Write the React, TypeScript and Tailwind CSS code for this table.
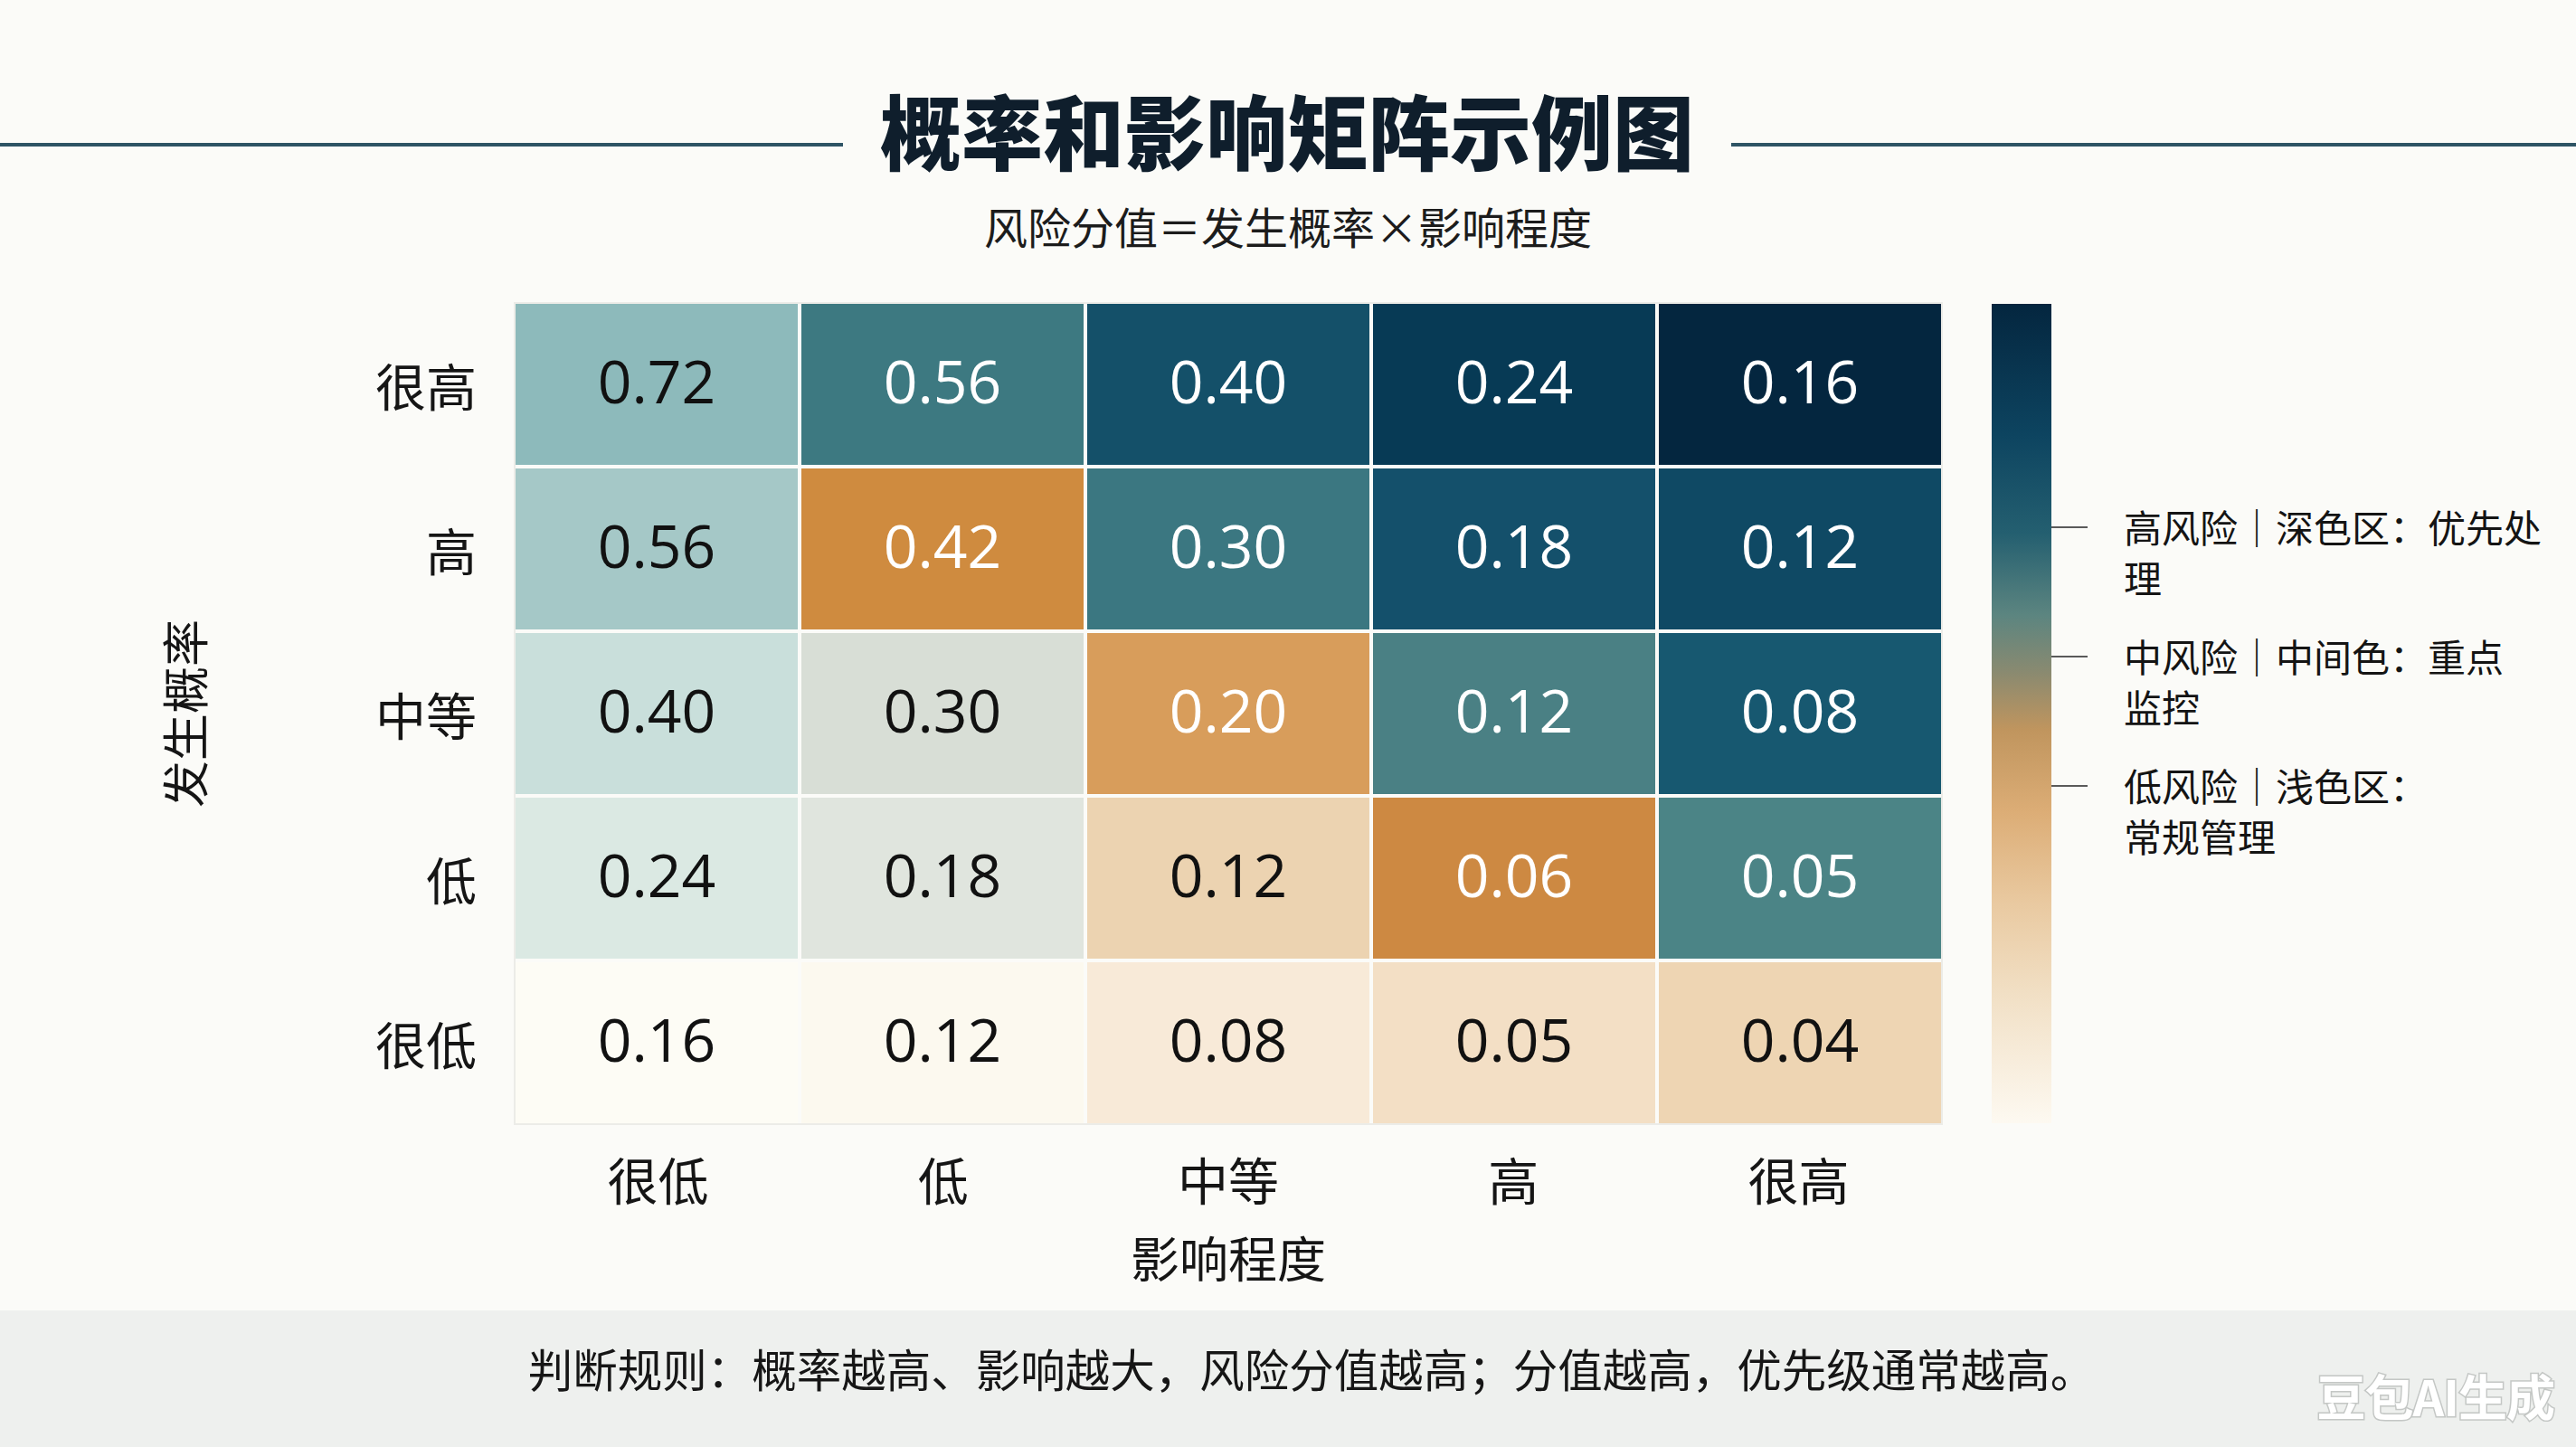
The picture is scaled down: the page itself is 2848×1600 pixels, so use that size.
const rowLabels = ['很高', '高', '中等', '低', '很低']
const colLabels = ['很低', '低', '中等', '高', '很高']

type Cell = { v: string; bg: string; light?: boolean }

// light = white text
const matrix: Cell[][] = [
  [
    { v: '0.72', bg: 'bg-[#8dbabb]' },
    { v: '0.56', bg: 'bg-[#3d7981]', light: true },
    { v: '0.40', bg: 'bg-[#145069]', light: true },
    { v: '0.24', bg: 'bg-[#073a55]', light: true },
    { v: '0.16', bg: 'bg-[#04263f]', light: true },
  ],
  [
    { v: '0.56', bg: 'bg-[#a5c8c7]' },
    { v: '0.42', bg: 'bg-[#cf8b3f]', light: true },
    { v: '0.30', bg: 'bg-[#3b7781]', light: true },
    { v: '0.18', bg: 'bg-[#14506b]', light: true },
    { v: '0.12', bg: 'bg-[#0f4964]', light: true },
  ],
  [
    { v: '0.40', bg: 'bg-[#c9dfdb]' },
    { v: '0.30', bg: 'bg-[#d8ded6]' },
    { v: '0.20', bg: 'bg-[#d89d5b]', light: true },
    { v: '0.12', bg: 'bg-[#4a8084]', light: true },
    { v: '0.08', bg: 'bg-[#175870]', light: true },
  ],
  [
    { v: '0.24', bg: 'bg-[#dbe9e3]' },
    { v: '0.18', bg: 'bg-[#e0e5de]' },
    { v: '0.12', bg: 'bg-[#ecd3b1]' },
    { v: '0.06', bg: 'bg-[#cd8942]', light: true },
    { v: '0.05', bg: 'bg-[#4b8486]', light: true },
  ],
  [
    { v: '0.16', bg: 'bg-[#fdfcf5]' },
    { v: '0.12', bg: 'bg-[#fcf9ef]' },
    { v: '0.08', bg: 'bg-[#f8ead8]' },
    { v: '0.05', bg: 'bg-[#f3dfc5]' },
    { v: '0.04', bg: 'bg-[#eed5b3]' },
  ],
]

const legend = [
  ['高风险｜深色区：优先处', '理'],
  ['中风险｜中间色：重点', '监控'],
  ['低风险｜浅色区：', '常规管理'],
]

export default function App() {
  return (
    <div className="relative flex h-[1600px] w-[2848px] flex-col overflow-hidden bg-[#fbfbf8] font-['Noto_Sans_CJK_SC',sans-serif] text-[#151515]">
      {/* title */}
      <div className="flex items-start pt-[97px]">
        <div className="mt-[61px] h-[4px] w-[932px] bg-[#2e5465]" />
        <h1 className="whitespace-nowrap px-[41px] text-[90px] font-black leading-[90px] text-[#0f1e2c]">
          概率和影响矩阵示例图
        </h1>
        <div className="mt-[61px] h-[4px] flex-1 bg-[#2e5465]" />
      </div>

      <p className="mt-[38px] text-center text-[48px] leading-[48px] text-[#1c1c1c]">
        风险分值＝发生概率×影响程度
      </p>

      {/* chart */}
      <div className="mt-[63px] flex pl-[173px]">
        <div className="flex h-[906px] w-[60px] items-center justify-center">
          <span className="rotate-180 text-[52px] leading-[60px] [text-orientation:sideways] [writing-mode:vertical-rl]">
            发生概率
          </span>
        </div>

        <div className="flex w-[294px] flex-col gap-[4px]">
          {rowLabels.map((r) => (
            <div key={r} className="flex h-[178px] items-center justify-end text-[56px] leading-[56px]">
              {r}
            </div>
          ))}
        </div>

        <div className="ml-[43px] grid w-[1576px] grid-cols-5 gap-[4px] shadow-[0_0_0_2px_#ecece8]">
          {matrix.flat().map((c, i) => (
            <div
              key={i}
              className={`flex h-[178px] items-center justify-center pb-[10px] font-['Open_Sans','Noto_Sans',sans-serif] text-[66px] leading-none ${c.bg} ${
                c.light ? 'text-white' : 'text-[#111]'
              }`}
            >
              {c.v}
            </div>
          ))}
        </div>

        <div className="ml-[56px] h-[906px] w-[66px] bg-[linear-gradient(to_bottom,#04263f_0%,#0d4460_16%,#245f70_28%,#5c8580_38%,#8a8a70_45%,#c0955e_52%,#dcad76_62%,#e9c9a0_73%,#f1dfc4_84%,#fdf9f1_100%)]" />

        <div className="flex flex-col gap-[33px] pt-[219px]">
          {legend.map((l) => (
            <div key={l[0]} className="flex items-start">
              <div className="mt-[27px] h-[2px] w-[40px] bg-[#5a5a5a]" />
              <div className="ml-[40px] flex flex-col gap-[2px] whitespace-nowrap text-[42px] text-[#141414]">
                <div className="h-[54px] leading-[54px]">{l[0]}</div>
                <div className="h-[54px] leading-[54px]">{l[1]}</div>
              </div>
            </div>
          ))}
        </div>
      </div>

      {/* x axis labels */}
      <div className="ml-[570px] mt-[33px] grid w-[1576px] grid-cols-5 text-center text-[56px] leading-[56px]">
        {colLabels.map((c) => (
          <div key={c}>{c}</div>
        ))}
      </div>
      <div className="ml-[570px] mt-[31px] w-[1576px] text-center text-[54px] leading-[56px]">影响程度</div>

      {/* bottom rule */}
      <div className="mt-auto h-[151px] bg-[#eef0ee] pl-[52px] pt-[40px] text-center text-[49.5px] leading-[48px] text-[#161616]">
        判断规则：概率越高、影响越大，风险分值越高；分值越高，优先级通常越高。
      </div>

      <div className="absolute bottom-[30px] right-[24px] text-[54px] font-bold leading-none tracking-[-1px] text-white [-webkit-text-stroke:3px_#c4c7c5] [paint-order:stroke_fill]">
        豆包AI生成
      </div>
    </div>
  )
}
